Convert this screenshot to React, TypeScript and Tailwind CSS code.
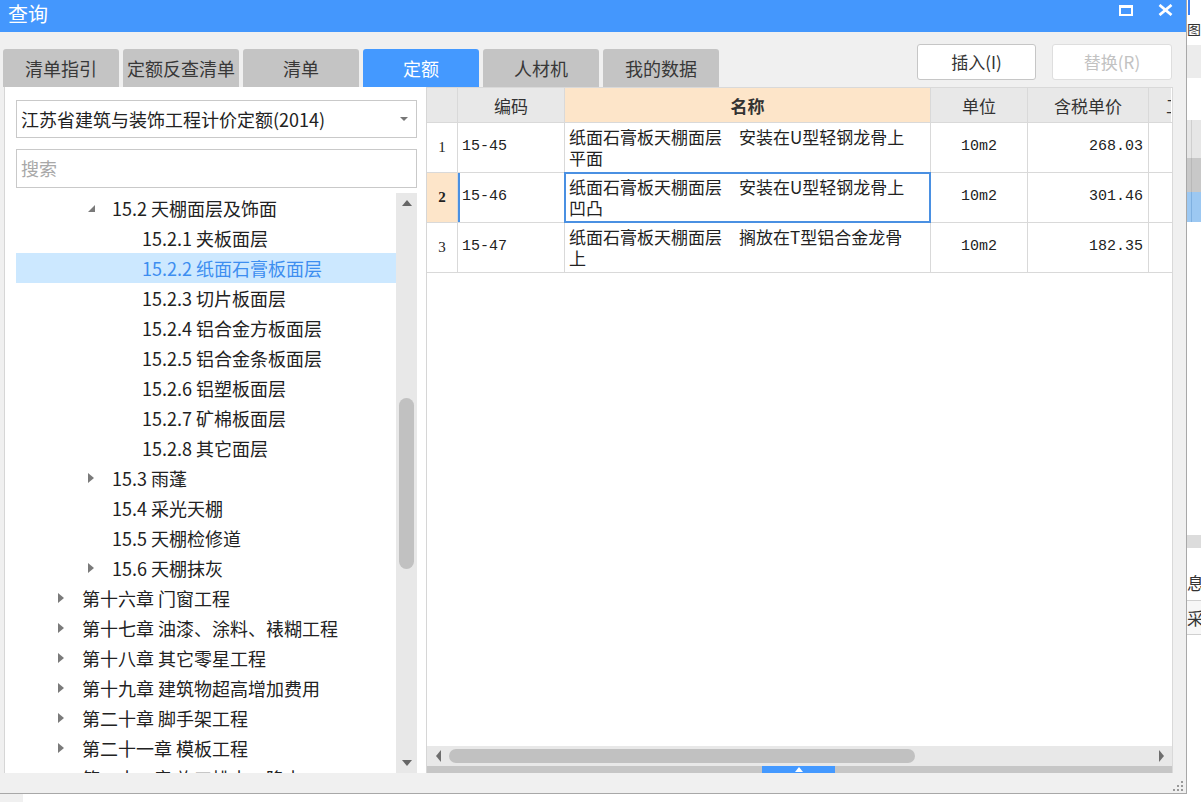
import React from 'react'

const tabs = ['清单指引', '定额反查清单', '清单', '定额', '人材机', '我的数据']

type TreeNode = { level: 0 | 1 | 2; label: string; arrow?: 'open' | 'closed'; selected?: boolean }

const tree: TreeNode[] = [
  { level: 1, label: '15.2 天棚面层及饰面', arrow: 'open' },
  { level: 2, label: '15.2.1 夹板面层' },
  { level: 2, label: '15.2.2 纸面石膏板面层', selected: true },
  { level: 2, label: '15.2.3 切片板面层' },
  { level: 2, label: '15.2.4 铝合金方板面层' },
  { level: 2, label: '15.2.5 铝合金条板面层' },
  { level: 2, label: '15.2.6 铝塑板面层' },
  { level: 2, label: '15.2.7 矿棉板面层' },
  { level: 2, label: '15.2.8 其它面层' },
  { level: 1, label: '15.3 雨蓬', arrow: 'closed' },
  { level: 1, label: '15.4 采光天棚' },
  { level: 1, label: '15.5 天棚检修道' },
  { level: 1, label: '15.6 天棚抹灰', arrow: 'closed' },
  { level: 0, label: '第十六章 门窗工程', arrow: 'closed' },
  { level: 0, label: '第十七章 油漆、涂料、裱糊工程', arrow: 'closed' },
  { level: 0, label: '第十八章 其它零星工程', arrow: 'closed' },
  { level: 0, label: '第十九章 建筑物超高增加费用', arrow: 'closed' },
  { level: 0, label: '第二十章 脚手架工程', arrow: 'closed' },
  { level: 0, label: '第二十一章 模板工程', arrow: 'closed' },
  { level: 0, label: '第二十二章 施工排水、降水', arrow: 'closed' },
]

const indent = ['pl-[42px]', 'pl-[72px]', 'pl-[102px]']

const rows = [
  { no: '1', code: '15-45', name: ['纸面石膏板天棚面层　安装在U型轻钢龙骨上', '平面'], unit: '10m2', price: '268.03' },
  { no: '2', code: '15-46', name: ['纸面石膏板天棚面层　安装在U型轻钢龙骨上', '凹凸'], unit: '10m2', price: '301.46', selected: true },
  { no: '3', code: '15-47', name: ['纸面石膏板天棚面层　搁放在T型铝合金龙骨', '上'], unit: '10m2', price: '182.35' },
]

function TreeArrow({ kind }: { kind?: 'open' | 'closed' }) {
  if (kind === 'open')
    return (
      <svg width="8" height="8" viewBox="0 0 8 8" className="mt-[1px]">
        <polygon points="7,0 7,7 0,7" fill="#7a7a7a" />
      </svg>
    )
  if (kind === 'closed')
    return (
      <svg width="6" height="10" viewBox="0 0 6 10">
        <polygon points="0,0 6,5 0,10" fill="#7a7a7a" />
      </svg>
    )
  return null
}

function Tree() {
  return (
    <div className="flex min-h-0 flex-1 pl-[11px] pr-[9px]">
      <div className="w-[380px] overflow-hidden">
        {tree.map((n) => (
          <div
            key={n.label}
            className={`flex h-[30px] items-center ${indent[n.level]} ${n.selected ? 'bg-[#cce8ff] text-[#3d8ef0]' : 'text-[#222]'}`}
          >
            <div className="flex w-[24px] items-center">
              <TreeArrow kind={n.arrow} />
            </div>
            <span className="whitespace-nowrap text-[18px] leading-none">{n.label}</span>
          </div>
        ))}
      </div>
      <div className="flex w-[21px] flex-col items-center bg-[#e8e8e8]">
        <div className="flex h-[20px] items-center">
          <svg width="10" height="6" viewBox="0 0 10 6">
            <polygon points="0,6 5,0 10,6" fill="#666" />
          </svg>
        </div>
        <div className="flex-1">
          <div className="mt-[185px] h-[171px] w-[15px] rounded-full bg-[#c1c1c1]" />
        </div>
        <div className="flex h-[20px] items-center">
          <svg width="10" height="6" viewBox="0 0 10 6">
            <polygon points="0,0 10,0 5,6" fill="#666" />
          </svg>
        </div>
      </div>
    </div>
  )
}

function LeftPanel() {
  return (
    <div className="ml-[4px] flex w-[423px] flex-col border-x border-[#d6d6d6] bg-white">
      <div className="px-[11px] pt-[13px]">
        <div className="flex h-[38px] w-[401px] items-center justify-between border border-[#c9c9c9] pl-[4px] pr-[8px]">
          <span className="text-[18px] text-[#222]">江苏省建筑与装饰工程计价定额(2014)</span>
          <svg width="8" height="4" viewBox="0 0 8 4">
            <polygon points="0,0 8,0 4,4" fill="#777" />
          </svg>
        </div>
        <div className="mt-[11px] flex h-[39px] w-[401px] items-center border border-[#c9c9c9] pl-[4px]">
          <span className="text-[18px] text-[#a8a8a8]">搜索</span>
        </div>
      </div>
      <div className="mt-[5px] flex min-h-0 flex-1 flex-col">
        <Tree />
      </div>
    </div>
  )
}

const cell = 'border-r border-[#d9d9d9] shrink-0'

function Table() {
  return (
    <div className="flex w-[746px] flex-col border-t border-r border-[#d9d9d9] bg-white">
      <div className="flex h-[35px] border-b border-[#d9d9d9] text-[17px] leading-[36px] text-[#333]">
        <div className={`${cell} w-[31px] bg-[#e8e8e8]`} />
        <div className={`${cell} w-[107px] bg-[#e8e8e8] text-center`}>编码</div>
        <div className={`${cell} w-[366px] bg-[#fde5c9] text-center font-bold`}>名称</div>
        <div className={`${cell} w-[97px] bg-[#e8e8e8] text-center`}>单位</div>
        <div className={`${cell} w-[121px] bg-[#e8e8e8] text-center`}>含税单价</div>
        <div className="w-[22px] overflow-hidden whitespace-nowrap bg-[#e8e8e8] pl-[17px]">工程量</div>
      </div>
      {rows.map((r) => (
        <div key={r.no} className="flex h-[50px] border-b border-[#d9d9d9] text-[#222]">
          <div
            className={`${cell} flex w-[31px] items-center justify-center font-['Liberation_Serif',serif] text-[15px] ${r.selected ? 'bg-[#fde5c9] font-bold' : ''}`}
          >
            {r.no}
          </div>
          <div
            className={`${cell} flex w-[107px] items-center font-['Liberation_Mono',monospace] text-[15px] ${r.selected ? 'border-l-2 border-l-[#4a90e2] pl-[2px]' : 'pl-[4px]'}`}
          >
            {r.code}
          </div>
          <div className={`${cell} relative w-[366px] pl-[4px] pt-[3px] text-[17px] leading-[21px]`}>
            {r.name.map((l) => (
              <div key={l} className="whitespace-nowrap">{l}</div>
            ))}
            {r.selected && <div className="absolute inset-[-1px] border-2 border-[#4a90e2]" />}
          </div>
          <div className={`${cell} flex w-[97px] items-center justify-center font-['Liberation_Mono',monospace] text-[15px]`}>
            {r.unit}
          </div>
          <div className={`${cell} flex w-[121px] items-center justify-end pr-[5px] font-['Liberation_Mono',monospace] text-[15px]`}>
            {r.price}
          </div>
          <div className="w-[22px]" />
        </div>
      ))}
      <div className="flex-1" />
      <div className="flex h-[20px] items-center bg-[#e8e8e8]">
        <div className="flex w-[22px] justify-center">
          <svg width="5" height="12" viewBox="0 0 5 12">
            <polygon points="5,0 5,12 0,6" fill="#6e6e6e" />
          </svg>
        </div>
        <div className="h-[14px] w-[466px] rounded-full bg-[#c1c1c1]" />
        <div className="flex-1" />
        <div className="flex w-[22px] justify-center">
          <svg width="5" height="12" viewBox="0 0 5 12">
            <polygon points="0,0 5,6 0,12" fill="#6e6e6e" />
          </svg>
        </div>
      </div>
      <div className="flex h-[7px] bg-[#c6c6c6]">
        <div className="ml-[335px] flex h-[7px] w-[73px] items-center justify-center bg-[#4499ff]">
          <svg width="8" height="5" viewBox="0 0 8 5">
            <polygon points="0,5 4,0 8,5" fill="#fff" />
          </svg>
        </div>
      </div>
    </div>
  )
}

function TitleBar() {
  return (
    <div className="flex h-[32px] items-start justify-between bg-[#4497fd] pl-[8px] pr-[13px]">
      <span className="text-[20px] leading-[27px] text-white">查询</span>
      <div className="mt-[4px] flex items-start gap-[25px]">
        <div className="mt-[1px] h-[11px] w-[14px] border-2 border-t-[3px] border-white" />
        <svg width="15" height="12" viewBox="0 0 15 12">
          <path d="M1.5 1 L13.5 11 M13.5 1 L1.5 11" stroke="#fff" strokeWidth="2.8" />
        </svg>
      </div>
    </div>
  )
}

function Toolbar() {
  return (
    <div className="flex h-[55px]">
      <div className="flex gap-[4px] self-end pl-[3px]">
        {tabs.map((t) => (
          <div
            key={t}
            className={`flex h-[38px] w-[116px] items-center justify-center rounded-t-[3px] text-[18px] ${t === '定额' ? 'bg-[#4499ff] text-white' : 'bg-[#c4c4c4] text-[#383838]'}`}
          >
            {t}
          </div>
        ))}
      </div>
      <div className="flex-1" />
      <div className="mr-[14px] mt-[12px] flex gap-[16px] self-start">
        <div className="flex h-[36px] w-[119px] items-center justify-center rounded-[3px] border border-[#c6c6c6] bg-white text-[17px] text-[#333]">
          插入(I)
        </div>
        <div className="flex h-[36px] w-[120px] items-center justify-center rounded-[3px] border border-[#dedede] bg-white text-[17px] text-[#c2c2c2]">
          替换(R)
        </div>
      </div>
    </div>
  )
}

function Grip() {
  const dots = [
    [8, 0],
    [4, 4],
    [8, 4],
    [0, 8],
    [4, 8],
    [8, 8],
  ]
  return (
    <svg width="10" height="10" viewBox="0 0 10 10">
      {dots.map(([x, y]) => (
        <rect key={`${x}-${y}`} x={x} y={y} width="2" height="2" fill="#999" />
      ))}
    </svg>
  )
}

function Strip() {
  return (
    <div className="flex flex-1 flex-col overflow-hidden bg-white">
      <div className="h-[22px] pl-[1px]">
        <div className="h-[15px] w-[2px] bg-[#3b82f6]" />
      </div>
      <div className="h-[14px] overflow-hidden whitespace-nowrap text-[14px] leading-[14px] text-[#333]">图商</div>
      <div className="h-[9px]" />
      <div className="h-[33px] bg-[#ececec]" />
      <div className="h-[42px]" />
      <div className="flex h-[38px] bg-[#e6e6e6]">
        <div className="w-[5px] border-r border-[#cfcfcf]" />
      </div>
      <div className="flex h-[34px] bg-[#c8c8c8]">
        <div className="w-[5px] border-r border-[#b8b8b8]" />
      </div>
      <div className="flex h-[30px] bg-[#9cc8f2]">
        <div className="w-[5px] border-r border-[#7fb0e0]" />
      </div>
      <div className="h-[313px]" />
      <div className="h-[13px] bg-[#dcdcdc]" />
      <div className="h-[17px]" />
      <div className="h-[35px] overflow-hidden whitespace-nowrap text-[17px] leading-[35px] text-[#333]">息</div>
      <div className="h-[35px] overflow-hidden whitespace-nowrap border-y border-[#d0d0d0] bg-[#f7f7f7] text-[17px] leading-[33px] text-[#333]">
        采
      </div>
      <div className="flex-1" />
    </div>
  )
}

export default function App() {
  return (
    <div className="flex h-[802px] w-[1201px] flex-col overflow-hidden bg-white font-['Noto_Sans_CJK_SC',sans-serif]">
      <div className="flex h-[794px]">
        <div className="flex w-[1187px] flex-col border-r border-b border-[#a8a8a8] bg-[#f0f0f0]">
          <TitleBar />
          <Toolbar />
          <div className="flex h-[686px]">
            <LeftPanel />
            <Table />
          </div>
          <div className="flex flex-1 items-end justify-end pb-[2px] pr-[3px]">
            <Grip />
          </div>
        </div>
        <Strip />
      </div>
      <div className="flex flex-1">
        <div className="w-[23px] bg-[#f0f0f0]" />
        <div className="flex-1 bg-white" />
      </div>
    </div>
  )
}
